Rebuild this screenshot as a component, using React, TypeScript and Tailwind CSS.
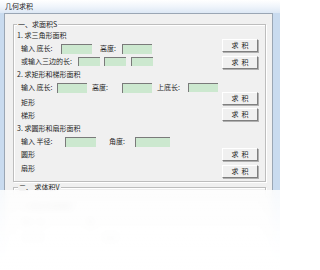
import React from "react";

const font = { fontFamily: '"Noto Sans CJK SC", "Noto Sans", sans-serif' };

function Box({ w, h = 10 }: { w: number; h?: number }) {
  return (
    <div
      className="shrink-0 bg-[#cce8cf] border-t border-l border-[#7a7a7a] border-b-[#e3e3e3] border-r-[#e3e3e3]"
      style={{ width: w, height: h }}
    />
  );
}

function Btn() {
  return (
    <div className="w-[36px] h-[13px] shrink-0 flex items-center justify-center bg-[#f0f0f0] border border-t-white border-l-white border-b-[#7f7f7f] border-r-[#7f7f7f] shadow-[1px_1px_0_#b0b0b0] text-[7px] leading-none text-[#222] tracking-[3px] pl-[3px]">
      求积
    </div>
  );
}

function Lbl({ w, children, ml = 0 }: { w: number; children: React.ReactNode; ml?: number }) {
  return (
    <span className="shrink-0 whitespace-nowrap" style={{ width: w, marginLeft: ml }}>
      {children}
    </span>
  );
}

export default function App() {
  return (
    <div
      className="relative w-[280px] h-[270px] overflow-hidden bg-[#c9dbef] text-[7px] leading-none text-[#1e1e1e]"
      style={font}
    >
      <div className="h-[13px] pl-[5px] flex items-center bg-gradient-to-b from-[#ffffff] via-[#f0f5fb] to-[#dde8f5] text-[7px] text-[#1a1a1a]">
        几何求积
      </div>
      <div className="ml-[4px] mr-[7px] h-[300px] border border-[#9aa6b4] bg-[#f0f0f0]">
        {/* group 1 */}
        <div className="relative ml-[8px] mt-[10px] w-[253px] h-[158px] border border-[#bdbdbd] shadow-[inset_1px_1px_0_#ffffff,1px_1px_0_#ffffff]">
          <span className="absolute left-[3px] top-[-5px] px-[1px] bg-[#f0f0f0] leading-[9px]">
            一、求面积S
          </span>
          <div className="flex">
            <div className="w-[208px] pt-[4px] flex flex-col">
              <div className="h-[13px] flex items-center pl-[3px]">1. 求三角形面积</div>
              <div className="h-[13px] flex items-center pl-[7px]">
                <Lbl w={40}>输入 底长:</Lbl>
                <Box w={31} />
                <Lbl w={22} ml={8}>高度:</Lbl>
                <Box w={30} />
              </div>
              <div className="h-[13px] flex items-center pl-[7px]">
                <Lbl w={57}>或输入三边的长:</Lbl>
                <Box w={22} h={9} />
                <div className="w-[4px]" />
                <Box w={22} h={9} />
                <div className="w-[5px]" />
                <Box w={22} h={9} />
              </div>
              <div className="h-[13px] flex items-center pl-[3px]">2. 求矩形和梯形面积</div>
              <div className="h-[13px] flex items-center pl-[7px]">
                <Lbl w={36}>输入 底长:</Lbl>
                <Box w={30} />
                <Lbl w={30} ml={5}>高度:</Lbl>
                <Box w={30} />
                <Lbl w={31} ml={5}>上底长:</Lbl>
                <Box w={30} h={9} />
              </div>
              <div className="h-[15px] flex items-center pl-[7px] pt-[2px]">矩形</div>
              <div className="h-[13px] flex items-center pl-[7px]">梯形</div>
              <div className="h-[13px] flex items-center pl-[3px]">3. 求圆形和扇形面积</div>
              <div className="h-[13px] flex items-center pl-[7px]">
                <Lbl w={44}>输入 半径:</Lbl>
                <Box w={31} />
                <Lbl w={26} ml={13}>角度:</Lbl>
                <Box w={35} />
              </div>
              <div className="h-[13px] flex items-center pl-[7px]">圆形</div>
              <div className="h-[14px] flex items-center pl-[7px]">扇形</div>
            </div>
            <div className="flex flex-col pt-[14px]">
              <Btn />
              <div className="h-[4px]" />
              <Btn />
              <div className="h-[23px]" />
              <Btn />
              <div className="h-[3px]" />
              <Btn />
              <div className="h-[27px]" />
              <Btn />
              <div className="h-[4px]" />
              <Btn />
            </div>
          </div>
        </div>
        {/* group 2 */}
        <div className="relative ml-[8px] mt-[5px] w-[253px] h-[80px] border border-[#bdbdbd] shadow-[inset_1px_1px_0_#ffffff,1px_1px_0_#ffffff]">
          <span className="absolute left-[4px] top-[-5px] px-[1px] bg-[#f0f0f0] leading-[9px]">
            二、 求体积V
          </span>
          <div className="pt-[12px] pl-[8px] flex flex-col gap-[4px] text-[#777]">
            <div className="h-[12px] flex items-center">1. 求长方体体积</div>
            <div className="h-[12px] flex items-center gap-[40px]">
              <span>输入 长:</span>
              <span>宽:</span>
            </div>
            <div className="h-[12px] flex items-center gap-[60px]">
              <span>立方体</span>
              <span>高度:</span>
            </div>
          </div>
        </div>
      </div>
      {/* faded lower part of the picture */}
      <div className="absolute left-0 right-0 top-[190px] bottom-0 backdrop-blur-[3px] bg-gradient-to-b from-white/85 via-white/95 to-white" />
    </div>
  );
}
